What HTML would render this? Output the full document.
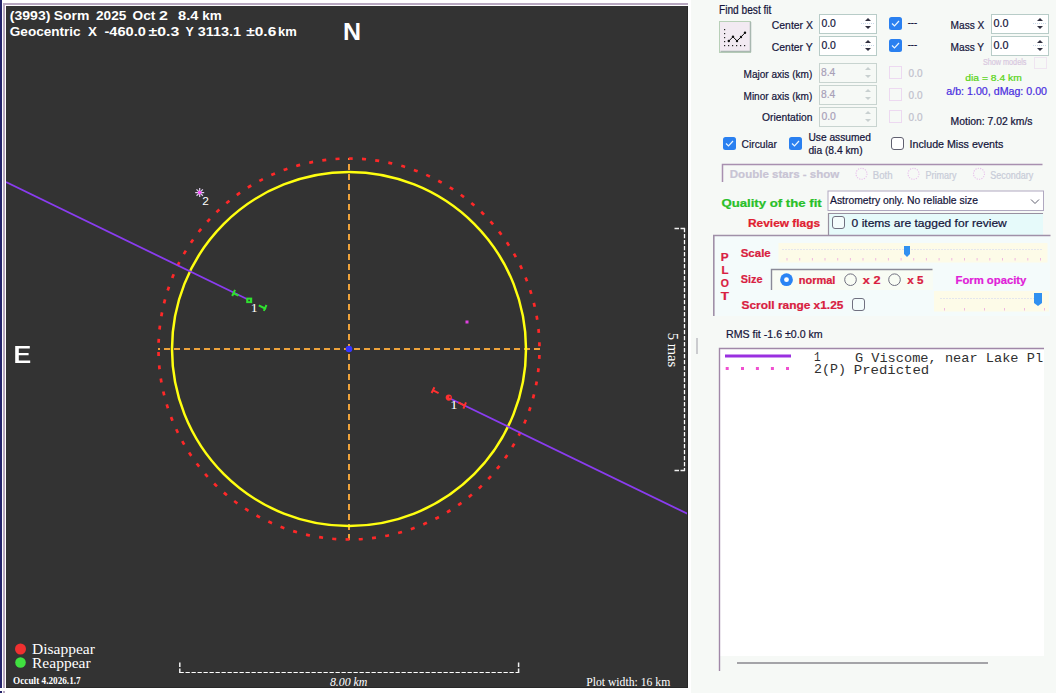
<!DOCTYPE html>
<html><head><meta charset="utf-8"><style>
*{margin:0;padding:0}
html,body{width:1056px;height:693px;overflow:hidden;background:#f6f9f6}
svg{display:block}
text{white-space:pre}
</style></head><body>
<svg width="1056" height="693" viewBox="0 0 1056 693">
<defs><clipPath id="pc"><rect x="6" y="6" width="681" height="681"/></clipPath></defs>
<rect x="0" y="0" width="691" height="693" fill="#ffffff"/>
<rect x="0" y="0" width="2" height="693" fill="#24246a"/>
<rect x="3" y="3" width="688" height="2" fill="#b8a8c0"/>
<rect x="3" y="3" width="2" height="690" fill="#b8a8c0"/>
<rect x="6" y="6" width="682" height="682" fill="#282828"/>
<rect x="6" y="6" width="681" height="681" fill="#333333"/>
<g clip-path="url(#pc)">
<line x1="349" y1="158" x2="349" y2="540" stroke="#eea23a" stroke-width="2" stroke-dasharray="6 4" stroke-dashoffset="4"/>
<line x1="158" y1="349" x2="540" y2="349" stroke="#eea23a" stroke-width="2" stroke-dasharray="6 4" stroke-dashoffset="4"/>
<circle cx="349" cy="349" r="177" fill="none" stroke="#ffff10" stroke-width="2.5"/>
<circle cx="349" cy="349" r="190.5" fill="none" stroke="#ff2828" stroke-width="2.7" stroke-dasharray="4 9.3" stroke-dashoffset="7.3"/>
<circle cx="349" cy="349" r="3.3" fill="#3434ff"/>
<line x1="6" y1="182" x2="249" y2="300" stroke="#8a3cf0" stroke-width="1.8"/>
<line x1="449" y1="398" x2="690" y2="515" stroke="#8a3cf0" stroke-width="1.8"/>
<rect x="465.5" y="320.5" width="3" height="3" fill="#e040e0"/>
<line x1="195.20" y1="192.60" x2="204.20" y2="192.60" stroke="#e0d0f0" stroke-width="1.2"/>
<line x1="196.52" y1="189.42" x2="202.88" y2="195.78" stroke="#e0d0f0" stroke-width="1.2"/>
<line x1="199.70" y1="188.10" x2="199.70" y2="197.10" stroke="#e0d0f0" stroke-width="1.2"/>
<line x1="202.88" y1="189.42" x2="196.52" y2="195.78" stroke="#e0d0f0" stroke-width="1.2"/>
<circle cx="199.7" cy="192.6" r="1.8" fill="#ff50ff"/>
<path d="M232.2,296 L235,289.8 M234,293.6 L238.5,295.6" stroke="#30e030" stroke-width="2" fill="none"/>
<rect x="246.2" y="297.6" width="6" height="5.5" fill="#30e030"/>
<rect x="248.3" y="299.6" width="1.6" height="1.6" fill="#333"/>
<path d="M258.8,305.3 L266,309 M266.5,305 L263.8,310.8" stroke="#30e030" stroke-width="2" fill="none"/>
<path d="M431.6,393 L434.4,387.2 M433.6,390.6 L438.6,393.2" stroke="#ff3030" stroke-width="2" fill="none"/>
<circle cx="448.8" cy="397.6" r="3.1" fill="#ff3030"/>
<rect x="449.2" y="396.4" width="1.4" height="1.4" fill="#552222"/>
<path d="M458.4,402.4 L465.5,406.2 M466,402.4 L463.4,408.6" stroke="#ff3030" stroke-width="2" fill="none"/>
<path d="M179.5,672.5 H519" fill="none" stroke="#ffffff" stroke-width="1.2" stroke-dasharray="4.3 1.7"/>
<path d="M179.8,673 V661.8 M518.6,673 V661.8" fill="none" stroke="#f0f0f0" stroke-width="1.5" stroke-dasharray="4.5 1.5"/>
<path d="M684.5,228 V471" fill="none" stroke="#ffffff" stroke-width="1.3" stroke-dasharray="4.3 1.7"/>
<path d="M685,228.5 H673.8 M685,470.5 H673.8" fill="none" stroke="#f0f0f0" stroke-width="1.3" stroke-dasharray="4.5 1.5"/>
<path d="M15.2,346 H29.8 V348.4 H18.8 V353 H28.6 V355.2 H18.8 V360.5 H30.2 V362.9 H15.2 Z" fill="#ffffff"/>
<circle cx="20.5" cy="649" r="5.5" fill="#f03030"/>
<circle cx="20.5" cy="662.5" r="5.3" fill="#40e040"/>
</g>
<rect x="691" y="0" width="365" height="693" fill="#f6f9f6"/>
<rect x="688" y="0" width="3" height="693" fill="#ffffff"/>
<rect x="0" y="688" width="691" height="3" fill="#ffffff"/>
<rect x="719.5" y="21.5" width="31" height="31" fill="#f2eaf2" stroke="#b8d0b8" stroke-width="1"/>
<path d="M720.5,51.5 H750.5 V22" fill="none" stroke="#a8b8b0" stroke-width="1.5"/>
<rect x="724" y="29" width="1.2" height="1.2" fill="#222"/>
<rect x="724" y="33" width="1.2" height="1.2" fill="#222"/>
<rect x="724" y="37" width="1.2" height="1.2" fill="#222"/>
<rect x="724" y="41" width="1.2" height="1.2" fill="#222"/>
<rect x="724" y="45" width="1.2" height="1.2" fill="#222"/>
<rect x="728" y="45" width="1.2" height="1.2" fill="#222"/>
<rect x="732" y="45" width="1.2" height="1.2" fill="#222"/>
<rect x="736" y="45" width="1.2" height="1.2" fill="#222"/>
<rect x="740" y="45" width="1.2" height="1.2" fill="#222"/>
<rect x="744" y="45" width="1.2" height="1.2" fill="#222"/>
<polyline points="728.8,41 733,36.8 737,41 741,37 745,32.8" fill="none" stroke="#111" stroke-width="1"/>
<circle cx="728.8" cy="41" r="1.2" fill="#111"/>
<circle cx="733" cy="36.8" r="1.2" fill="#111"/>
<circle cx="737" cy="41" r="1.2" fill="#111"/>
<circle cx="741" cy="37" r="1.2" fill="#111"/>
<circle cx="745" cy="32.8" r="1.2" fill="#111"/>
<rect x="819.5" y="14.5" width="57" height="19" fill="#ffffff" stroke="#b8ccc8" stroke-width="1"/>
<path d="M865,21 L868,18 L871,21 Z" fill="#303040"/>
<path d="M865,26 L868,29 L871,26 Z" fill="#303040"/>
<line x1="861" y1="23.5" x2="874" y2="23.5" stroke="#c8d8e8" stroke-width="1" stroke-dasharray="1 1"/>
<rect x="819.5" y="36.5" width="57" height="19" fill="#ffffff" stroke="#b8ccc8" stroke-width="1"/>
<path d="M865,43 L868,40 L871,43 Z" fill="#303040"/>
<path d="M865,48 L868,51 L871,48 Z" fill="#303040"/>
<line x1="861" y1="45.5" x2="874" y2="45.5" stroke="#c8d8e8" stroke-width="1" stroke-dasharray="1 1"/>
<rect x="991.5" y="14.5" width="57" height="19" fill="#ffffff" stroke="#b8ccc8" stroke-width="1"/>
<path d="M1037,21 L1040,18 L1043,21 Z" fill="#303040"/>
<path d="M1037,26 L1040,29 L1043,26 Z" fill="#303040"/>
<line x1="1033" y1="23.5" x2="1046" y2="23.5" stroke="#c8d8e8" stroke-width="1" stroke-dasharray="1 1"/>
<rect x="991.5" y="36.5" width="57" height="19" fill="#ffffff" stroke="#b8ccc8" stroke-width="1"/>
<path d="M1037,43 L1040,40 L1043,43 Z" fill="#303040"/>
<path d="M1037,48 L1040,51 L1043,48 Z" fill="#303040"/>
<line x1="1033" y1="45.5" x2="1046" y2="45.5" stroke="#c8d8e8" stroke-width="1" stroke-dasharray="1 1"/>
<rect x="819.5" y="63.5" width="57" height="19" fill="#f6f9f6" stroke="#c8d4d0" stroke-width="1"/>
<path d="M865,70 L868,67 L871,70 Z" fill="#c8d0d0"/>
<path d="M865,75 L868,78 L871,75 Z" fill="#c8d0d0"/>
<rect x="819.5" y="85.5" width="57" height="19" fill="#f6f9f6" stroke="#c8d4d0" stroke-width="1"/>
<path d="M865,92 L868,89 L871,92 Z" fill="#c8d0d0"/>
<path d="M865,97 L868,100 L871,97 Z" fill="#c8d0d0"/>
<rect x="819.5" y="107.5" width="57" height="19" fill="#f6f9f6" stroke="#c8d4d0" stroke-width="1"/>
<path d="M865,114 L868,111 L871,114 Z" fill="#c8d0d0"/>
<path d="M865,119 L868,122 L871,119 Z" fill="#c8d0d0"/>
<rect x="889" y="17" width="13" height="13" rx="2.5" fill="#2a80f0"/>
<path d="M892,23.5 L894.5,26 L899,21" fill="none" stroke="#e8f4ff" stroke-width="1.2"/>
<rect x="889" y="39" width="13" height="13" rx="2.5" fill="#2a80f0"/>
<path d="M892,45.5 L894.5,48 L899,43" fill="none" stroke="#e8f4ff" stroke-width="1.2"/>
<rect x="889.5" y="66.5" width="12" height="12" fill="none" stroke="#e4b8ec" stroke-width="1" stroke-dasharray="1 1"/>
<rect x="889.5" y="88.5" width="12" height="12" fill="none" stroke="#e4b8ec" stroke-width="1" stroke-dasharray="1 1"/>
<rect x="889.5" y="110.5" width="12" height="12" fill="none" stroke="#e4b8ec" stroke-width="1" stroke-dasharray="1 1"/>
<rect x="1034.5" y="57.5" width="12" height="11" fill="none" stroke="#e8d0ec" stroke-width="1" stroke-dasharray="1 1"/>
<rect x="723" y="137" width="13" height="13" rx="2.5" fill="#2a80f0"/>
<path d="M726,143.5 L728.5,146 L733,141" fill="none" stroke="#e8f4ff" stroke-width="1.2"/>
<rect x="789" y="137" width="13" height="13" rx="2.5" fill="#2a80f0"/>
<path d="M792,143.5 L794.5,146 L799,141" fill="none" stroke="#e8f4ff" stroke-width="1.2"/>
<rect x="891.5" y="137.5" width="12" height="12" rx="2.5" fill="#ffffff" stroke="#606070" stroke-width="1"/>
<path d="M722.5,182 V164.5 H1042.5" fill="none" stroke="#a890b0" stroke-width="1.5"/>
<circle cx="861.5" cy="173.8" r="5.5" fill="none" stroke="#e8c0ec" stroke-width="1.1" stroke-dasharray="1.2 1.2"/>
<circle cx="913.5" cy="173.8" r="5.5" fill="none" stroke="#e8c0ec" stroke-width="1.1" stroke-dasharray="1.2 1.2"/>
<circle cx="979" cy="173.8" r="5.5" fill="none" stroke="#e8c0ec" stroke-width="1.1" stroke-dasharray="1.2 1.2"/>
<rect x="828" y="191" width="215.5" height="19.5" fill="#ffffff" stroke="#b0a8c0" stroke-width="1"/>
<path d="M1031,199.5 L1035,203.5 L1039,199.5" fill="none" stroke="#606070" stroke-width="1"/>
<rect x="828" y="213" width="215" height="22" fill="#e6fafa"/>
<path d="M828.5,235 V213.5 H1043" fill="none" stroke="#9890a0" stroke-width="1.2"/>
<rect x="832.5" y="216.5" width="12" height="12" rx="2.5" fill="#f4fcfc" stroke="#707080" stroke-width="1"/>
<rect x="714" y="236" width="336" height="80" fill="#f4fbfb"/>
<path d="M713.8,316 V235.5 H1050.5" fill="none" stroke="#a090a8" stroke-width="1.6"/>
<rect x="778.5" y="243" width="269" height="19.5" fill="#fdfbe8"/>
<line x1="782" y1="249.5" x2="1042" y2="249.5" stroke="#e4e6ec" stroke-width="1" stroke-dasharray="2 1"/>
<rect x="786.5" y="258" width="1" height="2.5" fill="#f0b8e0"/>
<rect x="799.2" y="258" width="1" height="2.5" fill="#f0b8e0"/>
<rect x="811.9" y="258" width="1" height="2.5" fill="#f0b8e0"/>
<rect x="824.5" y="258" width="1" height="2.5" fill="#f0b8e0"/>
<rect x="837.2" y="258" width="1" height="2.5" fill="#f0b8e0"/>
<rect x="849.9" y="258" width="1" height="2.5" fill="#f0b8e0"/>
<rect x="862.5" y="258" width="1" height="2.5" fill="#f0b8e0"/>
<rect x="875.2" y="258" width="1" height="2.5" fill="#f0b8e0"/>
<rect x="887.9" y="258" width="1" height="2.5" fill="#f0b8e0"/>
<rect x="900.6" y="258" width="1" height="2.5" fill="#f0b8e0"/>
<rect x="913.2" y="258" width="1" height="2.5" fill="#f0b8e0"/>
<rect x="925.9" y="258" width="1" height="2.5" fill="#f0b8e0"/>
<rect x="938.6" y="258" width="1" height="2.5" fill="#f0b8e0"/>
<rect x="951.3" y="258" width="1" height="2.5" fill="#f0b8e0"/>
<rect x="964.0" y="258" width="1" height="2.5" fill="#f0b8e0"/>
<rect x="976.6" y="258" width="1" height="2.5" fill="#f0b8e0"/>
<rect x="989.3" y="258" width="1" height="2.5" fill="#f0b8e0"/>
<rect x="1002.0" y="258" width="1" height="2.5" fill="#f0b8e0"/>
<rect x="1014.6" y="258" width="1" height="2.5" fill="#f0b8e0"/>
<rect x="1027.3" y="258" width="1" height="2.5" fill="#f0b8e0"/>
<rect x="1040.0" y="258" width="1" height="2.5" fill="#f0b8e0"/>
<path d="M904,246 H910 V254 L907,257 L904,254 Z" fill="#3090f0"/>
<rect x="771" y="269" width="162" height="21" fill="#f8fcf4"/>
<path d="M771.5,290 V269.5 H932.5" fill="none" stroke="#8a8a98" stroke-width="1.4"/>
<circle cx="786.5" cy="279.7" r="6.4" fill="#2a84f4"/>
<circle cx="786.5" cy="279.7" r="2.4" fill="#ffffff"/>
<circle cx="850.5" cy="279.7" r="5.8" fill="none" stroke="#707080" stroke-width="1"/>
<circle cx="894.5" cy="279.7" r="5.8" fill="none" stroke="#707080" stroke-width="1"/>
<rect x="852.5" y="298.5" width="12" height="12" rx="2.5" fill="#f4fcfc" stroke="#707080" stroke-width="1"/>
<rect x="934" y="291" width="115" height="20.5" fill="#fdfbe8"/>
<line x1="940" y1="298.5" x2="1040" y2="298.5" stroke="#e4e6ec" stroke-width="1" stroke-dasharray="2 1"/>
<rect x="944" y="308" width="1" height="2.5" fill="#f0b8e0"/>
<rect x="964" y="308" width="1" height="2.5" fill="#f0b8e0"/>
<rect x="984" y="308" width="1" height="2.5" fill="#f0b8e0"/>
<rect x="1004" y="308" width="1" height="2.5" fill="#f0b8e0"/>
<rect x="1024" y="308" width="1" height="2.5" fill="#f0b8e0"/>
<rect x="1044" y="308" width="1" height="2.5" fill="#f0b8e0"/>
<path d="M1034,293 H1042 V303 L1038,306 L1034,303 Z" fill="#3090f0"/>
<rect x="696.5" y="338" width="1" height="16" fill="#a0a0a8"/>
<rect x="719" y="348" width="325" height="308" fill="#ffffff"/>
<path d="M719.5,671 V348.5 H1044" fill="none" stroke="#a088a8" stroke-width="1.4"/>
<rect x="725" y="354.5" width="66" height="3" fill="#9a30e0"/>
<rect x="725.7" y="367" width="3" height="3" fill="#f050d0"/>
<rect x="741.0" y="367" width="3" height="3" fill="#f050d0"/>
<rect x="755.9" y="367" width="3" height="3" fill="#f050d0"/>
<rect x="770.9" y="367" width="3" height="3" fill="#f050d0"/>
<rect x="786.0" y="367" width="3" height="3" fill="#f050d0"/>
<rect x="737" y="662" width="251" height="2" fill="#a4a4a8"/>
<text transform="translate(9.80,20.00) scale(1.0577,1)" style="font:normal bold 13.3px 'Liberation Sans';fill:#ffffff">(3993)</text>
<text transform="translate(53.80,20.00) scale(1.0493,1)" style="font:normal bold 13.3px 'Liberation Sans';fill:#ffffff">Sorm</text>
<text transform="translate(96.00,20.00) scale(1.0270,1)" style="font:normal bold 13.3px 'Liberation Sans';fill:#ffffff">2025</text>
<text transform="translate(132.60,20.00) scale(1.0291,1)" style="font:normal bold 13.3px 'Liberation Sans';fill:#ffffff">Oct</text>
<text transform="translate(159.00,20.00) scale(1.2000,1)" style="font:normal bold 13.3px 'Liberation Sans';fill:#ffffff">2</text>
<text transform="translate(178.00,20.00) scale(1.1001,1)" style="font:normal bold 13.3px 'Liberation Sans';fill:#ffffff">8.4</text>
<text transform="translate(202.30,20.00) scale(1.0166,1)" style="font:normal bold 13.3px 'Liberation Sans';fill:#ffffff">km</text>
<text transform="translate(9.80,36.00) scale(1.0207,1)" style="font:normal bold 13.3px 'Liberation Sans';fill:#ffffff">Geocentric</text>
<text transform="translate(87.90,36.00) scale(1.0111,1)" style="font:normal bold 13.3px 'Liberation Sans';fill:#ffffff">X</text>
<text transform="translate(104.50,36.00) scale(1.0990,1)" style="font:normal bold 13.3px 'Liberation Sans';fill:#ffffff">-460.0</text>
<text transform="translate(148.50,36.00) scale(1.1935,1)" style="font:normal bold 13.3px 'Liberation Sans';fill:#ffffff">±0.3</text>
<text transform="translate(185.60,36.00) scale(0.9333,1)" style="font:normal bold 13.3px 'Liberation Sans';fill:#ffffff">Y</text>
<text transform="translate(197.70,36.00) scale(1.0853,1)" style="font:normal bold 13.3px 'Liberation Sans';fill:#ffffff">3113.1</text>
<text transform="translate(246.20,36.00) scale(1.1659,1)" style="font:normal bold 13.3px 'Liberation Sans';fill:#ffffff">±0.6</text>
<text transform="translate(278.00,36.00) scale(0.9785,1)" style="font:normal bold 13.3px 'Liberation Sans';fill:#ffffff">km</text>
<text transform="translate(342.93,40.00) scale(1.0667,1)" style="font:normal bold 23.5px 'Liberation Sans';fill:#ffffff">N</text>
<text transform="translate(202.20,204.50) scale(1.1333,1)" style="font:normal normal 10.5px 'Liberation Sans';fill:#ffffff">2</text>
<text transform="translate(250.80,312.00) scale(1.2000,1)" style="font:normal normal 11.5px 'Liberation Serif';fill:#ffffff">1</text>
<text transform="translate(450.22,408.60) scale(1.2800,1)" style="font:normal normal 11.5px 'Liberation Serif';fill:#ffffff">1</text>
<text transform="translate(32.00,654.00) scale(1.0687,1)" style="font:normal normal 14.5px 'Liberation Serif';fill:#ffffff">Disappear</text>
<text transform="translate(32.00,668.00) scale(1.0708,1)" style="font:normal normal 14.5px 'Liberation Serif';fill:#ffffff">Reappear</text>
<text transform="translate(13.10,684.00) scale(0.8550,1)" style="font:normal bold 10.8px 'Liberation Serif';fill:#ffffff">Occult 4.2026.1.7</text>
<text transform="translate(329.90,686.00) scale(0.8919,1)" style="font:italic normal 13.3px 'Liberation Serif';fill:#ffffff">8.00 km</text>
<text transform="translate(586.20,685.80) scale(0.8857,1)" style="font:normal normal 13.2px 'Liberation Serif';fill:#ffffff">Plot width: 16 km</text>
<text transform="translate(668.20,332.80) rotate(90) scale(1.0428,1)" style="font:normal normal 14px 'Liberation Serif';fill:#ffffff">5 mas</text>
<text transform="translate(719.00,13.80) scale(0.8454,1)" style="font:normal normal 12px 'Liberation Sans';fill:#14143a;stroke:#14143a;stroke-width:0.22">Find best fit</text>
<text transform="translate(771.80,28.80) scale(0.8974,1)" style="font:normal normal 11.6px 'Liberation Sans';fill:#14143a;stroke:#14143a;stroke-width:0.22">Center X</text>
<text transform="translate(771.80,50.80) scale(0.8974,1)" style="font:normal normal 11.6px 'Liberation Sans';fill:#14143a;stroke:#14143a;stroke-width:0.22">Center Y</text>
<text transform="translate(821.40,26.80) scale(0.8999,1)" style="font:normal normal 11.6px 'Liberation Sans';fill:#14143a;stroke:#14143a;stroke-width:0.22">0.0</text>
<text transform="translate(821.40,49.00) scale(0.8999,1)" style="font:normal normal 11.6px 'Liberation Sans';fill:#14143a;stroke:#14143a;stroke-width:0.22">0.0</text>
<text transform="translate(993.60,26.80) scale(0.9318,1)" style="font:normal normal 11.6px 'Liberation Sans';fill:#14143a;stroke:#14143a;stroke-width:0.22">0.0</text>
<text transform="translate(993.60,48.60) scale(0.9318,1)" style="font:normal normal 11.6px 'Liberation Sans';fill:#14143a;stroke:#14143a;stroke-width:0.22">0.0</text>
<text transform="translate(950.60,29.10) scale(0.9039,1)" style="font:normal normal 11.2px 'Liberation Sans';fill:#14143a;stroke:#14143a;stroke-width:0.22">Mass X</text>
<text transform="translate(950.60,50.80) scale(0.9039,1)" style="font:normal normal 11.2px 'Liberation Sans';fill:#14143a;stroke:#14143a;stroke-width:0.22">Mass Y</text>
<text transform="translate(743.50,77.70) scale(0.8681,1)" style="font:normal normal 11.6px 'Liberation Sans';fill:#14143a;stroke:#14143a;stroke-width:0.22">Major axis (km)</text>
<text transform="translate(743.50,99.70) scale(0.8681,1)" style="font:normal normal 11.6px 'Liberation Sans';fill:#14143a;stroke:#14143a;stroke-width:0.22">Minor axis (km)</text>
<text transform="translate(762.00,120.60) scale(0.8887,1)" style="font:normal normal 11.6px 'Liberation Sans';fill:#14143a;stroke:#14143a;stroke-width:0.22">Orientation</text>
<text transform="translate(821.00,75.80) scale(0.8879,1)" style="font:normal normal 11.6px 'Liberation Sans';fill:#a8a0b8;stroke:#a8a0b8;stroke-width:0.22">8.4</text>
<text transform="translate(821.00,97.80) scale(0.8879,1)" style="font:normal normal 11.6px 'Liberation Sans';fill:#a8a0b8;stroke:#a8a0b8;stroke-width:0.22">8.4</text>
<text transform="translate(821.40,119.80) scale(0.8999,1)" style="font:normal normal 11.6px 'Liberation Sans';fill:#a8a0b8;stroke:#a8a0b8;stroke-width:0.22">0.0</text>
<text transform="translate(908.60,76.80) scale(0.9095,1)" style="font:normal normal 11px 'Liberation Sans';fill:#c0c0cc;stroke:#c0c0cc;stroke-width:0.22">0.0</text>
<text transform="translate(908.60,98.80) scale(0.9095,1)" style="font:normal normal 11px 'Liberation Sans';fill:#c0c0cc;stroke:#c0c0cc;stroke-width:0.22">0.0</text>
<text transform="translate(908.60,120.80) scale(0.9095,1)" style="font:normal normal 11px 'Liberation Sans';fill:#c0c0cc;stroke:#c0c0cc;stroke-width:0.22">0.0</text>
<text transform="translate(907.70,26.00) scale(0.9524,1)" style="font:normal normal 10px 'Liberation Sans';fill:#14143a;stroke:#14143a;stroke-width:0.22">---</text>
<text transform="translate(907.70,48.00) scale(0.9524,1)" style="font:normal normal 10px 'Liberation Sans';fill:#14143a;stroke:#14143a;stroke-width:0.22">---</text>
<text transform="translate(982.90,64.70) scale(0.8257,1)" style="font:normal normal 8.8px 'Liberation Sans';fill:#d8c8e0;stroke:#d8c8e0;stroke-width:0.22">Show models</text>
<text transform="translate(965.30,80.80) scale(1.0864,1)" style="font:normal normal 9.5px 'Liberation Sans';fill:#58d418;stroke:#58d418;stroke-width:0.22">dia = 8.4 km</text>
<text transform="translate(946.30,94.70) scale(1.0669,1)" style="font:normal normal 10px 'Liberation Sans';fill:#4a2ee0;stroke:#4a2ee0;stroke-width:0.22">a/b: 1.00, dMag: 0.00</text>
<text transform="translate(950.60,124.60) scale(1.0390,1)" style="font:normal normal 10px 'Liberation Sans';fill:#14143a;stroke:#14143a;stroke-width:0.22">Motion: 7.02 km/s</text>
<text transform="translate(741.60,148.00) scale(0.8833,1)" style="font:normal normal 11.6px 'Liberation Sans';fill:#14143a;stroke:#14143a;stroke-width:0.22">Circular</text>
<text transform="translate(808.40,141.20) scale(1.0235,1)" style="font:normal normal 10px 'Liberation Sans';fill:#14143a;stroke:#14143a;stroke-width:0.22">Use assumed</text>
<text transform="translate(808.40,154.00) scale(1.0274,1)" style="font:normal normal 10px 'Liberation Sans';fill:#14143a;stroke:#14143a;stroke-width:0.22">dia (8.4 km)</text>
<text transform="translate(909.58,148.20) scale(0.9216,1)" style="font:normal normal 11.6px 'Liberation Sans';fill:#14143a;stroke:#14143a;stroke-width:0.22">Include Miss events</text>
<text transform="translate(729.80,177.90) scale(0.9942,1)" style="font:normal bold 11.6px 'Liberation Sans';fill:#c8c4d4;stroke:#c8c4d4;stroke-width:0.22">Double stars - show</text>
<text transform="translate(872.70,179.00) scale(0.9645,1)" style="font:normal normal 10px 'Liberation Sans';fill:#c8ccd8;stroke:#c8ccd8;stroke-width:0.22">Both</text>
<text transform="translate(925.50,179.00) scale(0.9029,1)" style="font:normal normal 10px 'Liberation Sans';fill:#c8ccd8;stroke:#c8ccd8;stroke-width:0.22">Primary</text>
<text transform="translate(990.30,179.00) scale(0.8973,1)" style="font:normal normal 10px 'Liberation Sans';fill:#c8ccd8;stroke:#c8ccd8;stroke-width:0.22">Secondary</text>
<text transform="translate(721.40,206.80) scale(1.1383,1)" style="font:normal bold 11.6px 'Liberation Sans';fill:#28c028;stroke:#28c028;stroke-width:0.22">Quality of the fit</text>
<text transform="translate(830.00,204.00) scale(0.8943,1)" style="font:normal normal 11.6px 'Liberation Sans';fill:#14143a;stroke:#14143a;stroke-width:0.22">Astrometry only. No reliable size</text>
<text transform="translate(748.00,226.60) scale(1.0274,1)" style="font:normal bold 11.6px 'Liberation Sans';fill:#e02030;stroke:#e02030;stroke-width:0.22">Review flags</text>
<text transform="translate(851.60,226.60) scale(1.0384,1)" style="font:normal normal 11.6px 'Liberation Sans';fill:#14143a;stroke:#14143a;stroke-width:0.22">0 items are tagged for review</text>
<text transform="translate(720.80,260.80) scale(1.0250,1)" style="font:normal bold 11.5px 'Liberation Sans';fill:#d82040;stroke:#d82040;stroke-width:0.22">P</text>
<text transform="translate(721.50,274.10) scale(1.0000,1)" style="font:normal bold 11.5px 'Liberation Sans';fill:#d82040;stroke:#d82040;stroke-width:0.22">L</text>
<text transform="translate(720.80,287.30) scale(0.9111,1)" style="font:normal bold 11.5px 'Liberation Sans';fill:#d82040;stroke:#d82040;stroke-width:0.22">O</text>
<text transform="translate(720.80,299.80) scale(1.1714,1)" style="font:normal bold 11.5px 'Liberation Sans';fill:#d82040;stroke:#d82040;stroke-width:0.22">T</text>
<text transform="translate(740.70,256.60) scale(0.9919,1)" style="font:normal bold 11.6px 'Liberation Sans';fill:#d82040;stroke:#d82040;stroke-width:0.22">Scale</text>
<text transform="translate(740.70,282.80) scale(0.9389,1)" style="font:normal bold 11.6px 'Liberation Sans';fill:#d82040;stroke:#d82040;stroke-width:0.22">Size</text>
<text transform="translate(798.70,284.00) scale(0.9497,1)" style="font:normal bold 11.6px 'Liberation Sans';fill:#d82040;stroke:#d82040;stroke-width:0.22">normal</text>
<text transform="translate(862.80,284.00) scale(1.0977,1)" style="font:normal bold 11.6px 'Liberation Sans';fill:#d82040;stroke:#d82040;stroke-width:0.22">x 2</text>
<text transform="translate(907.30,284.00) scale(1.0019,1)" style="font:normal bold 11.6px 'Liberation Sans';fill:#d82040;stroke:#d82040;stroke-width:0.22">x 5</text>
<text transform="translate(741.50,308.90) scale(1.0271,1)" style="font:normal bold 11.6px 'Liberation Sans';fill:#d82040;stroke:#d82040;stroke-width:0.22">Scroll range x1.25</text>
<text transform="translate(955.50,283.90) scale(0.9748,1)" style="font:normal bold 11.6px 'Liberation Sans';fill:#e020d8;stroke:#e020d8;stroke-width:0.22">Form opacity</text>
<text transform="translate(726.00,337.90) scale(0.9169,1)" style="font:normal normal 11.6px 'Liberation Sans';fill:#14143a;stroke:#14143a;stroke-width:0.22">RMS fit -1.6 ±0.0 km</text>
<text transform="translate(814.00,361.00) scale(0.8000,1)" style="font:normal normal 13.6px 'Liberation Mono';fill:#303030">1</text>
<text transform="translate(854.90,361.50) scale(1.0034,1)" style="font:normal normal 13.6px 'Liberation Mono';fill:#303030">G Viscome, near Lake Pl</text>
<text transform="translate(814.00,373.20) scale(0.9779,1)" style="font:normal normal 13.6px 'Liberation Mono';fill:#303030">2(P)</text>
<text transform="translate(853.87,373.50) scale(1.0258,1)" style="font:normal normal 13.6px 'Liberation Mono';fill:#303030">Predicted</text>
</svg>
</body></html>
